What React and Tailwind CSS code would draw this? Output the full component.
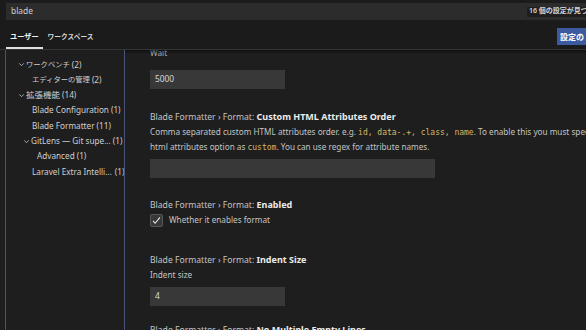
import React from 'react';

const font = { fontFamily: '"Noto Sans", "Noto Sans CJK JP", sans-serif' };

const Chevron = ({ className = '' }) => (
  <svg viewBox="0 0 16 16" className={`w-[9px] h-[9px] shrink-0 ${className}`} fill="none" stroke="#c5c5c5" strokeWidth="1.5">
    <path d="M4 6l4 4 4-4" />
  </svg>
);

const tree = [
  { label: 'ワークベンチ', count: '(2)', indent: 'pl-[11px]', size: 'text-[7.3px]', chevron: true },
  { label: 'エディターの管理', count: '(2)', indent: 'pl-[26px]', size: 'text-[7.3px]' },
  { label: '拡張機能', count: '(14)', indent: 'pl-[11px]', size: 'text-[8.5px]', chevron: true },
  { label: 'Blade Configuration', count: '(1)', indent: 'pl-[26px]' },
  { label: 'Blade Formatter', count: '(11)', indent: 'pl-[26px]' },
  { label: 'GitLens — Git supe...', count: '(1)', indent: 'pl-[16px]', chevron: true },
  { label: 'Advanced', count: '(1)', indent: 'pl-[31px]' },
  { label: 'Laravel Extra Intelli...', count: '(1)', indent: 'pl-[26px]', gap: 'ml-[3px]' },
];

const Code = ({ children }) => (
  <span className="text-[#d4b868] text-[8px]" style={{ fontFamily: '"DejaVu Sans Mono", monospace' }}>
    {children}
  </span>
);

const Title = ({ name }) => (
  <div className="h-[12px] leading-[12px] text-[8.6px] text-[#c4c4c4] whitespace-nowrap">
    Blade Formatter › Format: <span className="font-bold text-[9px] text-[#ececec]">{name}</span>
  </div>
);

const Input = ({ value, wide }) => (
  <div className={`${wide ? 'w-[285px]' : 'w-[135px]'} h-[19px] bg-[#383838] flex items-center pl-[5px] text-[8.4px] text-[#d8d8d8]`}>
    {value}
  </div>
);

export default function App() {
  return (
    <div className="w-[586px] h-[330px] overflow-hidden bg-[#1e1e1e] flex flex-col" style={font}>
      <div className="bg-[#1b1b1b] pt-[3px] pl-[6px]">
        <div className="h-[17px] bg-[#2c2c2c] flex items-center justify-between pl-[5px]">
          <span className="text-[8.4px] text-[#d0d0d0]">blade</span>
          <span className="bg-[#1e1e1e] text-[7px] text-[#dadada] font-semibold pl-[2px] w-[59px] h-[10px] flex items-center whitespace-nowrap overflow-hidden">16 個の設定が見つ</span>
        </div>
      </div>
      <div className="h-[30px] bg-[#1b1b1b] border-b border-[#353535] flex items-end justify-between pl-[6px]">
        <div className="flex items-end gap-[5px] font-bold">
          <div className="border-b-2 border-[#e0e0e0] pb-[5px] pl-[4px] pr-[4px] text-[7.2px] text-[#f0f0f0]">ユーザー</div>
          <div className="pb-[7px] text-[6.7px] text-[#d6d6d6]">ワークスペース</div>
        </div>
        <div className="self-start mt-[8px] h-[17px] bg-[#3b5a9f] text-[8px] font-bold text-white pl-[3px] w-[29px] whitespace-nowrap overflow-hidden flex items-center">設定の</div>
      </div>
      <div className="flex flex-1 min-h-0">
        <div className="w-[125px] shrink-0 flex pl-[5px]">
          <div className="flex-1 min-w-0 overflow-hidden border-l border-r border-[#45557a] pt-[7px] flex flex-col">
            {tree.map((t) => (
              <div key={t.label} className={`h-[15.3px] flex items-center text-[8.2px] text-[#cfcfcf] whitespace-nowrap ${t.indent}`}>
                {t.chevron && <Chevron />}
                <span className={t.size || ''}>{t.label}</span>
                <span className={t.gap || 'ml-[2px]'}>{t.count}</span>
              </div>
            ))}
          </div>
        </div>
        <div className="flex-1 min-w-0 overflow-hidden relative pl-[25px] flex flex-col">
          <div className="absolute inset-x-0 top-0 h-[4px] bg-gradient-to-b from-black/50 to-transparent" />
          <div className="-mt-[3px] h-[12px] leading-[12px] text-[8.2px] text-[#b0b0b0]">Wait</div>
          <div className="mt-[11px]"><Input value="5000" /></div>
          <div className="mt-[22px]"><Title name="Custom HTML Attributes Order" /></div>
          <div className="mt-[2px] text-[8.2px] text-[#c4c4c4] leading-[14px] whitespace-nowrap">
            <div>Comma separated custom HTML attributes order. e.g. <Code>id, data-.+, class, name</Code>. To enable this you must specify sort</div>
            <div>html attributes option as <Code>custom</Code>. You can use regex for attribute names.</div>
          </div>
          <div className="mt-[4px]"><Input wide /></div>
          <div className="mt-[21px]"><Title name="Enabled" /></div>
          <div className="mt-[3px] h-[13px] flex items-center gap-[6px]">
            <div className="w-[13px] h-[13px] bg-[#383838] border border-[#585858] rounded-[2px] flex items-center justify-center">
              <svg viewBox="0 0 16 16" className="w-[11px] h-[11px]" fill="none" stroke="#e8e8e8" strokeWidth="1.6">
                <path d="M3 8.5l3 3.5L13 3.5" />
              </svg>
            </div>
            <span className="text-[8.2px] text-[#c4c4c4]">Whether it enables format</span>
          </div>
          <div className="mt-[27px]"><Title name="Indent Size" /></div>
          <div className="mt-[3px] h-[12px] leading-[12px] text-[8.2px] text-[#c4c4c4]">Indent size</div>
          <div className="mt-[6px]"><Input value="4" /></div>
          <div className="mt-[18px]"><Title name="No Multiple Empty Lines" /></div>
        </div>
      </div>
    </div>
  );
}
